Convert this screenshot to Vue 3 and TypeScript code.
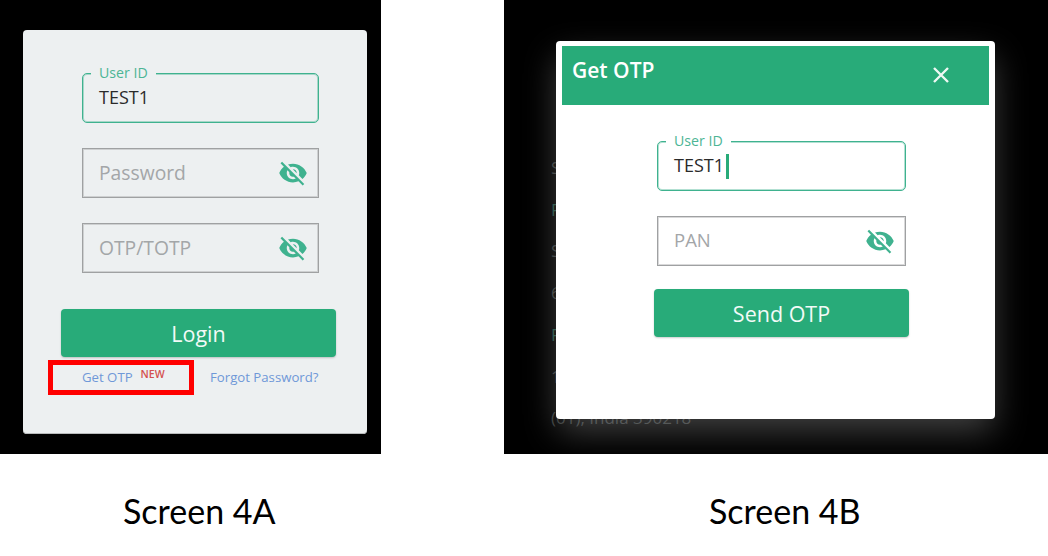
<script setup lang="ts">
const eyeOff = 'M12 7c2.76 0 5 2.24 5 5 0 .65-.13 1.26-.36 1.83l2.92 2.92c1.51-1.26 2.7-2.89 3.43-4.75-1.73-4.39-6-7.5-11-7.5-1.4 0-2.74.25-3.98.7l2.16 2.16C10.74 7.13 11.35 7 12 7zM2 4.27l2.28 2.28.46.46C3.08 8.3 1.78 10.02 1 12c1.73 4.39 6 7.5 11 7.5 1.55 0 3.03-.3 4.38-.84l.42.42L19.73 22 21 20.73 3.27 3 2 4.27zM7.53 9.8l1.55 1.55c-.05.21-.08.43-.08.65 0 1.66 1.34 3 3 3 .22 0 .44-.03.65-.08l1.55 1.55c-.67.33-1.41.53-2.2.53-2.76 0-5-2.24-5-5 0-.79.2-1.53.53-2.2zm4.31-.78l3.15 3.15.02-.16c0-1.66-1.34-3-3-3l-.17.01z'
const loginSecrets = ['Password', 'OTP/TOTP']
const ghostLines = ['Ship', 'Flat', 'Sector', '6th', 'Road', '100', '(01), India 390218']
</script>

<template>
  <div class="sheet">
    <section class="shot">
      <div class="panel panel-a">
        <div class="card">
          <div class="field active">
            <span class="legend">User ID</span>
            <span class="value">TEST1</span>
          </div>
          <div v-for="name in loginSecrets" :key="name" class="field">
            <span class="placeholder">{{ name }}</span>
            <svg class="eye" viewBox="0 0 24 24"><path :d="eyeOff" /></svg>
          </div>
          <button class="btn login">Login</button>
          <div class="links">
            <span class="get-otp">
              <a>Get OTP</a>
              <sup>NEW</sup>
              <span class="redbox"></span>
            </span>
            <a>Forgot Password?</a>
          </div>
        </div>
      </div>
      <p class="caption">Screen 4A</p>
    </section>

    <section class="shot">
      <div class="panel panel-b">
        <div class="ghost">
          <span v-for="line in ghostLines" :key="line">{{ line }}</span>
        </div>
        <div class="modal">
          <header class="modal-head">
            <h2>Get OTP</h2>
            <svg class="close" viewBox="0 0 18 18"><path d="M2 2l14 14M16 2L2 16" /></svg>
          </header>
          <div class="modal-body">
            <div class="field active">
              <span class="legend on-white">User ID</span>
              <span class="value">TEST1</span><i class="caret"></i>
            </div>
            <div class="field">
              <span class="placeholder pan">PAN</span>
              <svg class="eye" viewBox="0 0 24 24"><path :d="eyeOff" /></svg>
            </div>
            <button class="btn send">Send OTP</button>
          </div>
        </div>
      </div>
      <p class="caption">Screen 4B</p>
    </section>
  </div>
</template>

<style>
html, body {
  background: #fff;
}
</style>

<style scoped>
.sheet {
  display: flex;
  justify-content: space-between;
  width: 1048px;
  height: 556px;
  overflow: hidden;
  font-family: "Open Sans", "Noto Sans", sans-serif;
}

.panel {
  background: #000;
  height: 454px;
  box-sizing: border-box;
}

.panel-a {
  width: 381px;
  padding: 30px 0 0 23px;
}

.panel-b {
  position: relative;
  width: 544px;
  padding: 41px 0 0 52px;
  overflow: hidden;
}

.caption {
  margin: 35px 0 0;
  font: 34px/44px Lato, sans-serif;
  color: #000;
}

.shot:first-child .caption {
  padding-left: 123px;
}

.shot:last-child .caption {
  padding-left: 205px;
}

/* login card */
.card {
  width: 344px;
  height: 404px;
  box-sizing: border-box;
  padding: 43px 0 0 59px;
  background: #edf0f1;
  border-radius: 4px;
  box-shadow: inset 0 -1px 0 #b9bbbc;
}

.field {
  position: relative;
  display: flex;
  align-items: center;
  justify-content: space-between;
  box-sizing: border-box;
  width: 237px;
  height: 50px;
  padding: 0 11px 0 16px;
  margin-bottom: 25px;
  border: 1px solid #9fa1a2;
  /* second soft pixel, the border is about 1.5px wide in the shot */
  box-shadow: inset 0 0 0 1px rgba(159, 161, 162, 0.4);
  font-size: 19.3px;
}

.field.active {
  justify-content: flex-start;
  border-color: #3fb28f;
  border-radius: 5px;
  box-shadow: inset 0 0 0 1px rgba(63, 178, 143, 0.4);
}

.legend {
  position: absolute;
  top: -10px;
  left: 8px;
  padding: 0 8px;
  background: #edf0f1;
  color: #4cb595;
  font-size: 14.2px;
  line-height: 18px;
}

.legend.on-white {
  background: #fff;
}

.value {
  margin-top: -2px;
  color: #2a2a2a;
  font-size: 18px;
}

.placeholder {
  margin-top: -2px;
  color: #a3a6a8;
}

.placeholder.pan {
  margin-top: -4px;
  font-size: 18.5px;
}

.eye {
  width: 30px;
  height: 30px;
  margin-right: -1px;
  fill: #3fb28f;
}

.btn {
  display: block;
  height: 48px;
  padding: 0;
  border: 0;
  border-radius: 4px;
  background: #28ab79;
  color: #f2faf7;
  font: 21.5px "Open Sans", sans-serif;
  box-shadow: 0 1px 2px rgba(0, 0, 0, 0.2);
}

.login {
  width: 275px;
  margin: 36px 0 0 -21px;
}

.links {
  display: flex;
  margin-top: 11px;
  font-size: 13.2px;
  line-height: 18px;
  color: #6f98d8;
}

.get-otp {
  position: relative;
  display: flex;
  width: 128px;
}

.get-otp sup {
  margin: -3px 0 0 8px;
  color: #d4504f;
  font-size: 10.5px;
  font-weight: 600;
  line-height: 18px;
}

.redbox {
  position: absolute;
  top: -8px;
  left: -34px;
  width: 146px;
  height: 35px;
  box-sizing: border-box;
  border: 5px solid #f00;
}

/* otp modal */
.ghost {
  position: absolute;
  top: 157px;
  left: 47px;
  display: flex;
  flex-direction: column;
  gap: 20px;
  color: #333737;
  font-size: 17px;
  line-height: 21.7px;
  white-space: nowrap;
}

.ghost span:nth-child(3n + 2) {
  color: #1f4a3d;
}

.modal {
  position: relative;
  width: 439px;
  height: 378px;
  box-sizing: border-box;
  padding: 5px 6px;
  background: #fff;
  border-radius: 4px;
  box-shadow: 0 14px 34px -2px rgba(255, 255, 255, 0.26);
}

.modal-head {
  display: flex;
  justify-content: space-between;
  height: 59px;
  padding: 9px 39px 0 10px;
  box-sizing: border-box;
  background: #28ab79;
  color: #fff;
}

.modal-head h2 {
  margin: 0;
  font-size: 21px;
  font-weight: 600;
  line-height: 30px;
}

.close {
  width: 18px;
  height: 18px;
  margin-top: 11px;
  fill: none;
  stroke: #eef8f4;
  stroke-width: 2.4;
}

.modal-body {
  padding: 36px 0 0 95px;
}

.modal-body .field {
  width: 249px;
}

.caret {
  width: 3px;
  height: 25px;
  margin: 0 0 0 2px;
  background: #28ab79;
}

.send {
  width: 255px;
  margin: -2px 0 0 -3px;
}
</style>
